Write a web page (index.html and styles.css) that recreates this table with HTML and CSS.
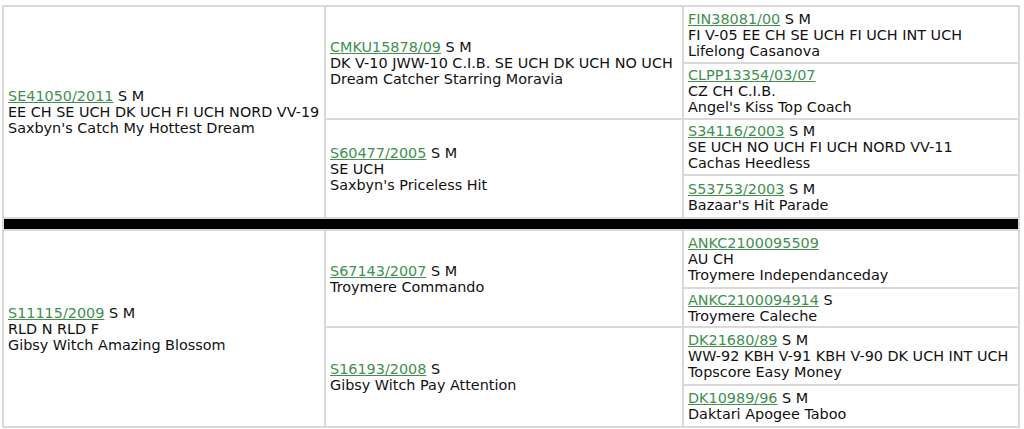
FILE: index.html
```html
<!DOCTYPE html>
<html lang="en">
<head>
    <meta charset="UTF-8">
    <title>Pedigree</title>
    <link rel="stylesheet" href="styles.css">
</head>
<body>
    <table class="pedigree">
        <tr class="r1">
            <td class="gen1" rowspan="4"><a href="#">SE41050/2011</a> S M<br>EE CH SE UCH DK UCH FI UCH NORD VV-19<br>Saxbyn's Catch My Hottest Dream</td>
            <td class="gen2" rowspan="2"><a href="#">CMKU15878/09</a> S M<br>DK V-10 JWW-10 C.I.B. SE UCH DK UCH NO UCH<br>Dream Catcher Starring Moravia</td>
            <td class="gen3"><a href="#">FIN38081/00</a> S M<br>FI V-05 EE CH SE UCH FI UCH INT UCH<br>Lifelong Casanova</td>
        </tr>
        <tr class="r2">
            <td class="gen3"><a href="#">CLPP13354/03/07</a><br>CZ CH C.I.B.<br>Angel's Kiss Top Coach</td>
        </tr>
        <tr class="r3">
            <td class="gen2" rowspan="2"><a href="#">S60477/2005</a> S M<br>SE UCH<br>Saxbyn's Priceless Hit</td>
            <td class="gen3"><a href="#">S34116/2003</a> S M<br>SE UCH NO UCH FI UCH NORD VV-11<br>Cachas Heedless</td>
        </tr>
        <tr class="r4">
            <td class="gen3"><a href="#">S53753/2003</a> S M<br>Bazaar's Hit Parade</td>
        </tr>
        <tr class="divider">
            <td colspan="3"></td>
        </tr>
        <tr class="r5">
            <td class="gen1" rowspan="4"><a href="#">S11115/2009</a> S M<br>RLD N RLD F<br>Gibsy Witch Amazing Blossom</td>
            <td class="gen2" rowspan="2"><a href="#">S67143/2007</a> S M<br>Troymere Commando</td>
            <td class="gen3"><a href="#">ANKC2100095509</a><br>AU CH<br>Troymere Independanceday</td>
        </tr>
        <tr class="r6">
            <td class="gen3"><a href="#">ANKC2100094914</a> S<br>Troymere Caleche</td>
        </tr>
        <tr class="r7">
            <td class="gen2" rowspan="2"><a href="#">S16193/2008</a> S<br>Gibsy Witch Pay Attention</td>
            <td class="gen3"><a href="#">DK21680/89</a> S M<br>WW-92 KBH V-91 KBH V-90 DK UCH INT UCH<br>Topscore Easy Money</td>
        </tr>
        <tr class="r8">
            <td class="gen3"><a href="#">DK10989/96</a> S M<br>Daktari Apogee Taboo</td>
        </tr>
    </table>
</body>
</html>
```

FILE: styles.css
```css
body {
    margin: 0;
    padding: 5px 0 0 2px;
    background-color: #fff;
    font-family: "DejaVu Sans", Verdana, sans-serif;
    font-size: 14.4px;
    line-height: 16px;
    color: #111;
}
.pedigree {
    width: 1018px;
    border-collapse: collapse;
    table-layout: fixed;
}
.pedigree td {
    border: 2px solid #d9d9d9;
    padding: 0 4px;
    vertical-align: middle;
    overflow: hidden;
    white-space: nowrap;
}
.pedigree td.gen1 {
    width: 312px;
}
.pedigree td.gen2 {
    width: 348px;
}
.pedigree a {
    color: #428f50;
    text-decoration: underline;
}
.r1 { height: 57px; }
.r2 { height: 56px; }
.r3 { height: 56px; }
.r4 { height: 43px; }
.r5 { height: 58px; }
.r6 { height: 39px; }
.r7 { height: 58px; }
.r8 { height: 42px; }
.divider td {
    height: 10px;
    padding: 0;
    background-color: #000;
}
```
